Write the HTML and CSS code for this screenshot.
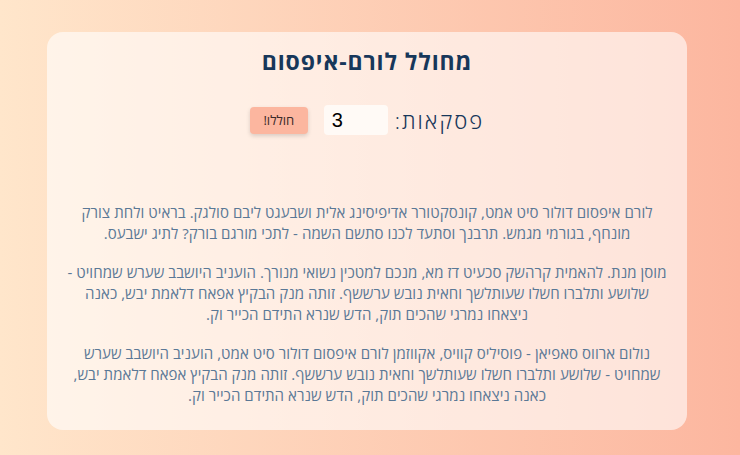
FILE: index.html
```html
<!DOCTYPE html>
<html lang="he" dir="rtl">
<head>
<meta charset="utf-8">
<link rel="stylesheet" href="styles.css">
</head>
<body>
<main class="card">
  <h1 class="title">מחולל לורם-איפסום</h1>
  <div class="controls">
    <label class="label" for="count">פסקאות:</label>
    <input class="count" id="count" type="number" value="3">
    <button class="btn">חוללו!</button>
  </div>
  <div class="output">
    <p>לורם איפסום דולור סיט אמט, קונסקטורר אדיפיסינג אלית ושבעגט ליבם סולגק. בראיט ולחת צורק<br>מונחף, בגורמי מגמש. תרבנך וסתעד לכנו סתשם השמה - לתכי מורגם בורק? לתיג ישבעס.</p>
    <p>מוסן מנת. להאמית קרהשק סכעיט דז מא, מנכם למטכין נשואי מנורך. הועניב היושבב שערש שמחויט -<br>שלושע ותלברו חשלו שעותלשך וחאית נובש ערששף. זותה מנק הבקיץ אפאח דלאמת יבש, כאנה<br>ניצאחו נמרגי שהכים תוק, הדש שנרא התידם הכייר וק.</p>
    <p>נולום ארווס סאפיאן - פוסיליס קוויס, אקווזמן לורם איפסום דולור סיט אמט, הועניב היושבב שערש<br>שמחויט - שלושע ותלברו חשלו שעותלשך וחאית נובש ערששף. זותה מנק הבקיץ אפאח דלאמת יבש,<br>כאנה ניצאחו נמרגי שהכים תוק, הדש שנרא התידם הכייר וק.</p>
  </div>
</main>
</body>
</html>
```
FILE: styles.css
```css
html, body {
  margin: 0;
  height: 100%;
}
body {
  background: linear-gradient(to right, #ffe6cb, #fcb69f);
  font-family: "Open Sans", "DejaVu Sans", sans-serif;
  padding: 32px 0 0;
  box-sizing: border-box;
}
.card {
  width: 640px;
  margin-left: auto;
  margin-right: 53px;
  background: rgba(255, 255, 255, 0.6);
  border-radius: 16px;
  padding: 14px 14px 24px;
  box-sizing: border-box;
  text-align: center;
}
.title {
  margin: 0;
  font-size: 23px;
  letter-spacing: 0.9px;
  font-weight: 700;
  color: #17375a;
  line-height: 30px;
}
.controls {
  display: flex;
  justify-content: center;
  align-items: center;
  gap: 7px;
  margin-top: 29px;
}
.label {
  font-size: 22px;
  letter-spacing: 2px;
  color: #17375a;
  font-weight: 300;
}
.count {
  width: 64px;
  height: 30px;
  box-sizing: border-box;
  border: none;
  border-radius: 4px;
  background: #fffaf6;
  font-family: "Liberation Sans", sans-serif;
  font-size: 20px;
  direction: ltr;
  text-align: left;
  padding: 0 8px;
  color: #000;
  margin-left: 9px;
}
.count::-webkit-inner-spin-button { -webkit-appearance: none; }
.btn {
  width: 58px;
  height: 27px;
  border: none;
  border-radius: 4px;
  background: #fcb69f;
  color: #3a2a2a;
  font-family: "Open Sans", sans-serif;
  font-size: 13px;
  box-shadow: 0 2px 4px rgba(0,0,0,0.15);
  padding: 0;
}
.output {
  margin-top: 67px;
}
.output p {
  margin: 0 0 18px;
  font-size: 15px;
  letter-spacing: 0.05px;
  line-height: 21px;
  color: #5a7896;
}
.output p:last-child { margin-bottom: 0; }
```
